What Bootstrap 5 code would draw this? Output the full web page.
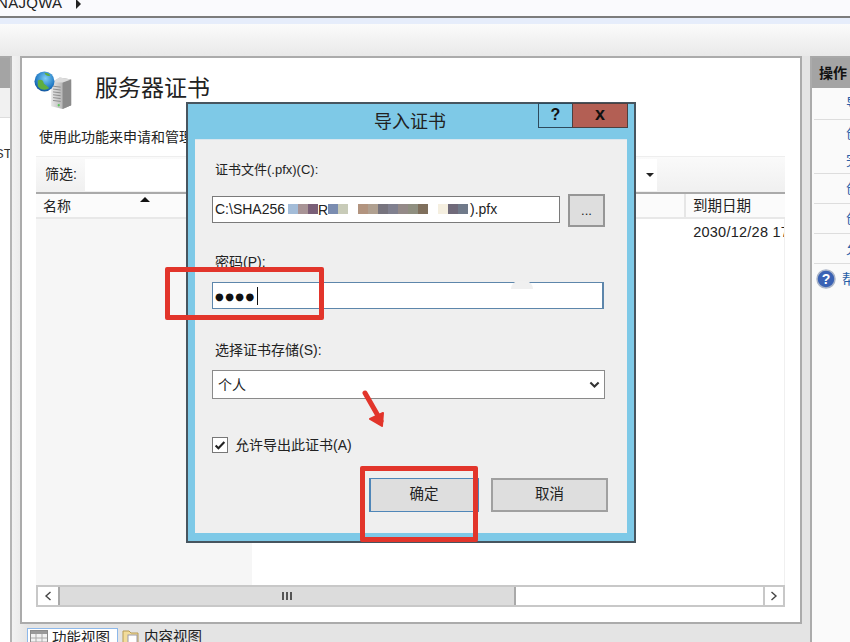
<!DOCTYPE html>
<html lang="zh">
<head>
<meta charset="utf-8">
<title>服务器证书</title>
<link rel="stylesheet" href="https://cdn.jsdelivr.net/npm/bootstrap@5.3.0/dist/css/bootstrap.min.css">
<style>
html,body{height:642px;overflow:hidden;}
body{width:850px;font-family:"Liberation Sans","Noto Sans CJK SC",sans-serif;font-size:13px;color:#222;background:#e4e4e4;position:relative;}
.crumb{height:18px;background:#fafafd;border-bottom:2px solid #7c7c7c;font-size:15px;line-height:6px;color:#222;overflow:hidden;letter-spacing:.3px;}
.crumb-tri{width:0;height:0;border-left:5px solid #222;border-top:5px solid transparent;border-bottom:5px solid transparent;margin:-1px 0 0 14px;}
.strip{height:6px;background:#e6edfb;}
.band{height:32px;background:linear-gradient(#fbfbfb,#e9e9e9);}
.work{height:586px;}
.left-pane{width:12px;flex:none;background:#fff;border-right:2px solid #b4b4b4;border-top:2px solid #a8a8a8;overflow:hidden;}
.lp-head{height:30px;background:#a4a4a4;}
.lp-sub{height:30px;background:#f1f1f1;border-bottom:1px solid #ddd;}
.lp-text{height:60px;line-height:72px;padding-left:0;font-size:13px;color:#333;white-space:nowrap;text-indent:-5px;}
.center{width:798px;flex:none;padding:0 8px;background:linear-gradient(90deg,#f2f2f2,#e4e4e4 2%);}
.main-panel{height:568px;background:#fff;border:2px solid #ababab;}
.head-row{padding:12px 0 0 12px;height:66px;}
.page-title{font-size:23px;line-height:34px;margin:-1px 0 0 21px;font-weight:400;color:#222;font-family:"Noto Sans CJK SC",sans-serif;}
.desc{margin:0 0 0 17px;height:32px;line-height:22px;padding-top:2px;box-sizing:border-box;font-size:14px;color:#222;white-space:nowrap;}
.list-frame{margin-left:14px;width:749px;}
.filter-row{height:36px;background:linear-gradient(#fafafa,#f0f0f0);border-top:1px solid #eee;}
.filter-label{width:49px;padding-left:9px;line-height:35px;font-size:14px;}
.filter-box{width:572px;height:32px;margin-top:2px;background:#fff;position:relative;}
.drop-tri{position:absolute;right:3px;top:14px;border-top:4px solid #222;border-left:4px solid transparent;border-right:4px solid transparent;}
.list-head{height:27px;border-top:2px solid #aaa;border-bottom:2px solid #e8e8e8;background:#fbfbfb;line-height:24px;position:relative;font-size:14px;}
.col-name{width:650px;padding-left:7px;border-right:2px solid #e6e6e6;}
.col-date{padding-left:7px;font-size:14.5px;}
.sort-tri{position:absolute;left:104px;top:3px;border-bottom:5px solid #111;border-left:5px solid transparent;border-right:5px solid transparent;}
.list-body{height:366px;border-right:1px solid #f0f0f0;}
.list-left{width:216px;background:#f6f6f6;}
.list-mid{width:441px;}
.list-date{width:92px;overflow:hidden;white-space:nowrap;padding:2px 0 0 1px;font-size:14.5px;letter-spacing:.25px;line-height:22px;}
.hscroll{height:22px;border:2px solid #c8c8c8;background:#fff;}
.sc-btn{width:20px;flex:none;background:#fff;}
.sc-thumb{width:458px;background:#dcdcdc;border:2px solid #a9a9a9;border-width:0 2px;gap:2px;}
.grip{width:2px;height:8px;background:#555;}
.sc-end{border-left:2px solid #c8c8c8;}
.tabs{padding:4px 0 0 7px;font-size:14.5px;line-height:18px;height:18px;}
.tab-on{width:91px;height:30px;border:1px solid #8db8ea;border-bottom:0;background:#fff;padding-left:2px;}
.tab-off{padding-left:4px;}
.right-pane{width:40px;flex:none;background:#fafafa;border-left:2px solid #ababab;border-top:2px solid #a8a8a8;overflow:hidden;}
.rp-head{height:30px;background:#a4a4a4;font-weight:700;font-size:14px;line-height:28px;padding-left:7px;white-space:nowrap;color:#111;font-family:"Noto Sans CJK SC",sans-serif;}
.rp-item{padding-left:32px;white-space:nowrap;color:#2a5fa8;font-size:14px;line-height:29px;border-bottom:1px solid #ddd;margin-left:2px;}
.rp-first{line-height:31px;}
.rp-double{line-height:26.5px;}
.rp-help{display:flex;align-items:center;padding-left:4px;gap:6px;height:30px;white-space:nowrap;color:#2a5fa8;font-size:14px;}
.dlg{position:absolute;left:186px;top:102px;width:450px;height:441px;background:#7ec9e7;border:2px solid #47555f;}
.dlg-title{height:35px;line-height:36px;text-align:center;font-size:18px;color:#222;padding-right:2px;}
.dlg-btns{position:absolute;right:6px;top:-1px;height:25px;}
.dlg-help{width:34px;background:#7ec9e7;border:1px solid #2e4a5c;border-right:0;font-weight:700;font-size:16px;line-height:22px;text-align:center;color:#111;}
.dlg-close{width:56px;background:#b35f54;border:1px solid #4c4040;font-weight:700;font-size:18px;line-height:20px;text-align:center;color:#111;}
.dlg-body{margin:0 7px;height:394px;background:#efefef;padding:21px 22px 0 17px;border-top:1px solid #d8e6ee;}
.fld-label{font-size:14px;line-height:18px;height:18px;color:#222;margin-bottom:0;display:block;padding-left:3px;white-space:nowrap;}
.file-label{font-size:13px;}
.file-row{margin-top:15px;height:33px;}
.file-input.form-control{width:348px;height:27px;margin-top:2px;padding:0 2px;border:1px solid #7a7a7a;border-radius:0;font-size:14px;line-height:25px;color:#222;position:relative;background:#fff;white-space:nowrap;box-shadow:none;}
.dots-btn.btn{width:37px;height:33px;margin-left:8px;padding:0;border:2px solid #969696;background:#dedede;border-radius:0;font-size:13px;line-height:26px;color:#222;}
.mosaic{position:absolute;left:75px;top:0;height:25px;width:183px;background:#fff;}
.mz-row{position:absolute;left:0;top:7px;height:10px;line-height:12px;}
.mz-row i{display:block;height:10px;width:10px;font-style:normal;}
.pwd-label{margin-top:26px;}
.pwd-input.form-control{width:392px;height:27px;margin-top:11px;padding:0 2px 0 2px;border:1px solid #5d86ab;border-width:1px 2px 1px 1px;border-radius:0;background:#fff;font-size:13px;line-height:25px;color:#111;box-shadow:none;}
.pdots{letter-spacing:1.4px;font-family:"DejaVu Sans",sans-serif;font-size:10px;}
.caret-bar{display:inline-block;width:1px;height:18px;background:#111;vertical-align:-5px;margin-left:1px;}
.store-label{margin-top:32px;}
.store-sel.form-select{width:393px;height:29px;margin-top:11px;padding:0 24px 0 5px;border:1px solid #8a8a8a;border-radius:0;font-size:14px;color:#222;box-shadow:none;font-family:"Noto Sans CJK SC",sans-serif;background-size:13px 11px;background-position:right 3px center;background-image:url("data:image/svg+xml,%3csvg xmlns='http://www.w3.org/2000/svg' viewBox='0 0 16 16'%3e%3cpath fill='none' stroke='%23333' stroke-width='3' d='M2 5l6 6 6-6'/%3e%3c/svg%3e");}
.exp-check.form-check{margin:38px 0 0;padding:0;min-height:16px;height:16px;display:flex;align-items:center;gap:7px;}
.exp-check .form-check-input{float:none;margin:0;width:16px;height:16px;border:1px solid #777;border-radius:0;background-color:#fff;background-size:14px;background-image:url("data:image/svg+xml,%3csvg xmlns='http://www.w3.org/2000/svg' viewBox='0 0 16 16'%3e%3cpath fill='none' stroke='%23222' stroke-width='2.4' d='M3 8.5l3.2 3.2L13 4.5'/%3e%3c/svg%3e");box-shadow:none;opacity:1;}
.exp-check .form-check-label{font-size:14px;color:#222;opacity:1;white-space:nowrap;}
.btn-line{margin-top:25px;padding-left:157px;gap:12px;width:440px;}
.dlg-btn.btn{height:34px;padding:0;border-radius:0;background:#dedede;border:2px solid #a0a0a0;font-size:14.5px;color:#222;flex:none;}
.ok-btn.btn{width:110px;border:1px solid #4f86b8;border-width:1px 2px;}
.cancel-btn.btn{width:117px;}
.red-box{position:absolute;border:5px solid #e2352b;border-radius:2px;pointer-events:none;}
.rb1{left:165px;top:267px;width:159px;height:53px;}
.rb2{left:360px;top:466px;width:118px;height:76px;}
.red-arrow{position:absolute;left:360px;top:390px;}
.notch{position:absolute;left:511px;top:281px;width:22px;height:8px;background:#f0f0f0;border-radius:11px 11px 0 0;}
</style>
</head>
<body>
<div class="crumb d-flex align-items-start"><span style="margin-left:-3px">NAJQWA</span><span class="crumb-tri"></span></div>
<div class="strip"></div>
<div class="band"></div>
<div class="work d-flex">
  <div class="left-pane">
    <div class="lp-head"></div><div class="lp-sub"></div><div class="lp-text">ST</div>
  </div>
  <div class="center">
    <div class="main-panel">
      <div class="head-row d-flex">
        <svg width="40" height="40" viewBox="0 0 42 42" aria-hidden="true">
          <defs>
            <linearGradient id="sv" x1="0" x2="1"><stop offset="0" stop-color="#e8e8e8"/><stop offset=".55" stop-color="#b8b8b8"/><stop offset="1" stop-color="#777"/></linearGradient>
            <radialGradient id="gb" cx=".55" cy=".35" r=".7"><stop offset="0" stop-color="#7fd0f5"/><stop offset=".7" stop-color="#2078c4"/><stop offset="1" stop-color="#0f4a90"/></radialGradient>
          </defs>
          <path d="M18 13l9-5 12 2v27l-9 4-12-3z" fill="url(#sv)"/>
          <path d="M30 13v28l9-4V10z" fill="#8b8b8b"/>
          <path d="M18 13l9-5 12 2-9 3z" fill="#dcdcdc"/>
          <path d="M20 17l8 1M20 20l8 1M20 23l8 1M20 26l8 1M20 29l8 1M20 32l8 1" stroke="#8a8a8a" stroke-width="1"/>
          <circle cx="26" cy="37" r="1.2" fill="#5ac85a"/>
          <circle cx="11" cy="12" r="10.5" fill="url(#gb)"/>
          <path d="M4 11c3-2 6 0 6 2s4 3 6 6c-4 3-9 2-12-2zM11 3c3 0 5 1 6 3-2 1-5 0-6-3z" fill="#5fae3e"/>
        </svg>
        <h1 class="page-title">服务器证书</h1>
      </div>
      <p class="desc">使用此功能来申请和管理</p>
      <div class="list-frame">
        <div class="filter-row d-flex">
          <div class="filter-label">筛选:</div>
          <div class="filter-box"><span class="drop-tri"></span></div>
        </div>
        <div class="list-head d-flex">
          <div class="col-name">名称</div><span class="sort-tri"></span>
          <div class="col-date">到期日期</div>
        </div>
        <div class="list-body d-flex">
          <div class="list-left"></div>
          <div class="list-mid"></div>
          <div class="list-date">2030/12/28 17:00:00</div>
        </div>
        <div class="hscroll d-flex">
          <div class="sc-btn d-flex align-items-center justify-content-center">
            <svg width="8" height="10" viewBox="0 0 8 10" aria-hidden="true"><path d="M6.500 1L2 5l4.500 4" fill="none" stroke="#444" stroke-width="1.400"/></svg>
          </div>
          <div class="sc-thumb d-flex align-items-center justify-content-center">
            <span class="grip"></span><span class="grip"></span><span class="grip"></span>
          </div>
          <div class="flex-grow-1"></div>
          <div class="sc-btn sc-end d-flex align-items-center justify-content-center">
            <svg width="8" height="10" viewBox="0 0 8 10" aria-hidden="true"><path d="M1.500 1L6 5 1.500 9" fill="none" stroke="#444" stroke-width="1.400"/></svg>
          </div>
        </div>
      </div>
    </div>
    <div class="tabs d-flex">
      <div class="tab-on d-flex gap-1">
        <svg width="18" height="18" viewBox="0 0 18 18" aria-hidden="true"><rect x=".5" y="1.500" width="17" height="16" fill="#f2f2f2" stroke="#8a8a8a"/><rect x="1" y="2" width="16" height="3" fill="#999"/><path d="M1 9h16M1 13h16M6 5v13M12 5v13" stroke="#aaa"/></svg>
        <span>功能视图</span>
      </div>
      <div class="tab-off d-flex gap-1">
        <svg width="18" height="18" viewBox="0 0 18 18" aria-hidden="true"><path d="M1 3h6l2 2h7v12H1z" fill="#f2dc9a" stroke="#b79b55"/><rect x="6" y="7" width="9" height="10" fill="#fff" stroke="#99a"/></svg>
        <span>内容视图</span>
      </div>
    </div>
  </div>
  <div class="right-pane">
    <div class="rp-head">操作</div>
    <div class="rp-item rp-first">导入...</div>
    <div class="rp-item rp-double">创建证书申请<br>完成证书申请</div>
    <div class="rp-item">创建域证书</div>
    <div class="rp-item">创建自签名证书</div>
    <div class="rp-item">允许自动重新绑定</div>
    <div class="rp-help">
      <svg width="20" height="20" viewBox="0 0 20 20" style="flex:none" aria-hidden="true"><circle cx="10" cy="10" r="9" fill="#3a62b4" stroke="#a9b4c8" stroke-width="1.500"/><text x="10" y="15" text-anchor="middle" font-size="14" font-weight="700" fill="#fff" font-family="Liberation Sans">?</text></svg>
      <span>帮助</span>
    </div>
  </div>
</div>

<div class="dlg" role="dialog">
  <div class="dlg-title">导入证书</div>
  <div class="dlg-btns d-flex">
    <div class="dlg-help">?</div>
    <div class="dlg-close">x</div>
  </div>
  <div class="dlg-body">
    <label class="fld-label file-label">证书文件(.pfx)(C):</label>
    <div class="file-row d-flex">
      <div class="file-input form-control">C:\SHA256
        <span class="mosaic"><span class="mz-row d-flex">
          <i style="background:#a3bcd8"></i><i style="background:#a89496"></i><i style="background:#7a5f78"></i><i>R</i><i style="background:#7a8cb0"></i><i style="background:#c8cbb8"></i><i style="background:#fff"></i><i style="background:#b2947f"></i><i style="background:#b0a090"></i><i style="background:#77747e"></i><i style="background:#80808f"></i><i style="background:#948a88"></i><i style="background:#8f8f80"></i><i style="background:#7f6f5c"></i><i style="background:#fff"></i><i style="background:#f5efe0"></i><i style="background:#706a7a"></i><i style="background:#707a8a"></i>
        </span></span>
        <span style="position:absolute;left:257px;top:0">).pfx</span>
      </div>
      <button type="button" class="dots-btn btn">...</button>
    </div>
    <label class="fld-label pwd-label">密码(P):</label>
    <div class="pwd-input form-control"><span class="pdots">●●●●</span><span class="caret-bar"></span></div>
    <label class="fld-label store-label">选择证书存储(S):</label>
    <select class="store-sel form-select"><option>个人</option></select>
    <div class="exp-check form-check">
      <input class="form-check-input" type="checkbox" id="exp" checked>
      <label class="form-check-label" for="exp">允许导出此证书(A)</label>
    </div>
    <div class="btn-line d-flex">
      <button type="button" class="dlg-btn ok-btn btn">确定</button>
      <button type="button" class="dlg-btn cancel-btn btn">取消</button>
    </div>
  </div>
</div>
<span class="notch"></span>

<div class="red-box rb1"></div>
<div class="red-box rb2"></div>
<svg class="red-arrow" width="30" height="40" viewBox="0 0 30 40" aria-hidden="true">
  <path d="M5 3l16 28" stroke="#e2352b" stroke-width="5" stroke-linecap="round" fill="none"/>
  <path d="M10 29l12 7 1-13z" fill="#e2352b" stroke="#e2352b" stroke-width="2" stroke-linejoin="round"/>
</svg>
<script src="https://cdn.jsdelivr.net/npm/bootstrap@5.3.0/dist/js/bootstrap.bundle.min.js"></script>
</body>
</html>
